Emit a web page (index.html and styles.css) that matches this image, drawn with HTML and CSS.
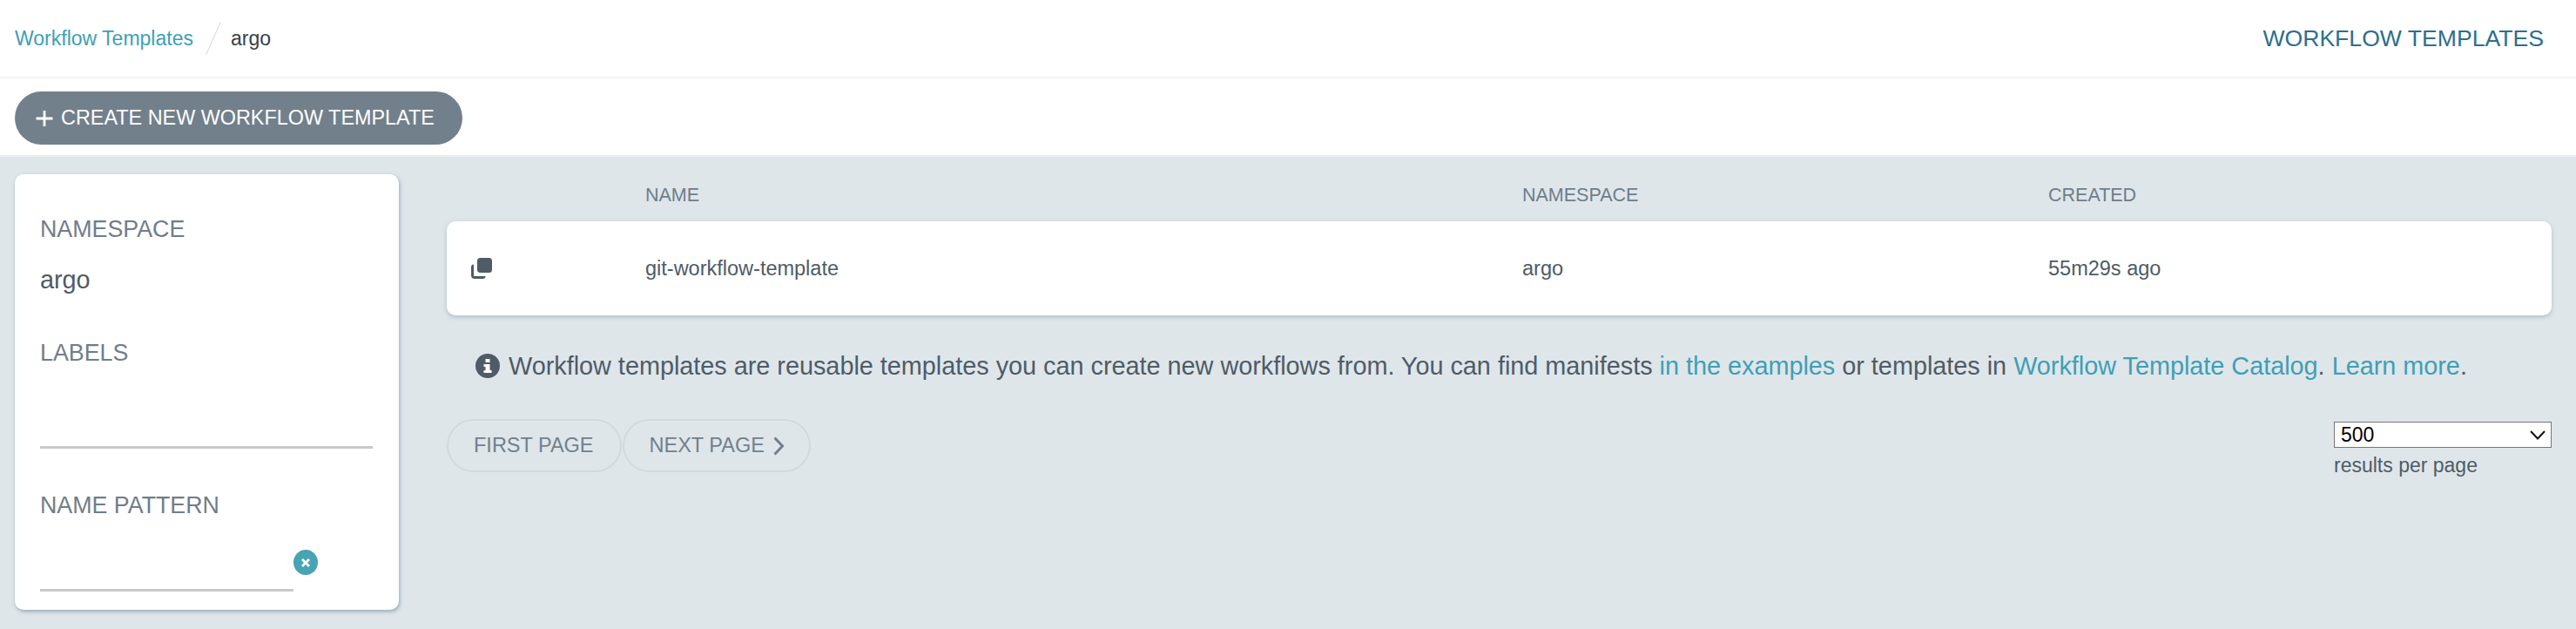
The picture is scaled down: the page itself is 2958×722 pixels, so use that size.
FILE: index.html
```html
<!doctype html>
<html lang="en">
<head>
	<meta http-equiv="Content-Type" content="text/html; charset=utf-8">
	<title>Workflow Templates</title>
	<link rel="stylesheet" href="styles.css">
</head>
<body>
	<header class="top-bar">
		<div class="breadcrumbs">
			<a class="crumb-link" href="#">Workflow Templates</a>
			<svg class="crumb-sep" width="18" height="38" viewBox="0 0 18 38"><path d="M17.500 0 L0.500 38" stroke="#ccd6dd" stroke-width="1" fill="none"/></svg>
			<span class="crumb-current">argo</span>
		</div>
		<div class="page-title">WORKFLOW TEMPLATES</div>
	</header>

	<div class="tool-bar">
		<button class="btn-create">
			<svg class="plus" width="20" height="18" viewBox="0 0 20 18"><path d="M10 0 V18 M0.500 9 H19.500" stroke="#fff" stroke-width="2.800" fill="none"/></svg>
			CREATE NEW WORKFLOW TEMPLATE
		</button>
	</div>

	<div class="content">
		<aside class="filters">
			<div class="filter-title">NAMESPACE</div>
			<div class="filter-value">argo</div>
			<div class="filter-title labels-title">LABELS</div>
			<div class="filter-line"></div>
			<div class="filter-title pattern-title">NAME PATTERN</div>
			<div class="pattern-row">
				<div class="filter-line short"></div>
				<span class="clear-btn">
					<svg width="12" height="12" viewBox="0 0 12 12"><path d="M2 2 L10 10 M10 2 L2 10" stroke="#fff" stroke-width="2.800" fill="none"/></svg>
				</span>
			</div>
		</aside>

		<main class="list">
			<div class="table-head">
				<div></div>
				<div>NAME</div>
				<div>NAMESPACE</div>
				<div>CREATED</div>
			</div>
			<div class="table-row">
				<div class="row-icon">
					<svg width="24" height="24" viewBox="0 0 24 24">
						<path d="M3 9 Q1.500 9 1.500 10.500 V20 Q1.500 22.500 4 22.500 H13.500 Q15 22.500 15 21" stroke="#4f5b66" stroke-width="3" fill="none"/>
						<rect x="7" y="0" width="17" height="17" rx="3.500" fill="#4f5b66"/>
					</svg>
				</div>
				<div>git-workflow-template</div>
				<div>argo</div>
				<div>55m29s ago</div>
			</div>

			<p class="info">
				<svg class="info-icon" width="28" height="28" viewBox="0 0 28 28">
					<circle cx="14" cy="14" r="14" fill="#4f5b66"/>
					<rect x="11.500" y="6" width="5" height="4" fill="#fff"/>
					<path d="M9.500 12 H16.500 V19 H18.500 V22 H9.500 V19 H11.500 V15 H9.500 Z" fill="#fff"/>
				</svg>
				Workflow templates are reusable templates you can create new workflows from. You can find manifests <a href="#">in the examples</a> or templates in <a href="#">Workflow Template Catalog</a>. <a href="#">Learn more</a>.
			</p>

			<div class="pager">
				<div class="pager-btns">
					<button class="btn-page">FIRST PAGE</button>
					<button class="btn-page">NEXT PAGE
						<svg width="14" height="22" viewBox="0 0 14 22"><path d="M2.500 1.500 L11.500 11 L2.500 20.500" stroke="#73808b" stroke-width="3" fill="none"/></svg>
					</button>
				</div>
				<div class="page-size">
					<div class="select-wrap">
						<select class="size-select">
							<option>500</option>
						</select>
						<svg class="select-arrow" width="18" height="11" viewBox="0 0 18 11"><path d="M1 1 L9 9.500 L17 1" stroke="#111" stroke-width="2" fill="none"/></svg>
					</div>
					<div class="size-label">results per page</div>
				</div>
			</div>
		</main>
	</div>
</body>
</html>
```

FILE: styles.css
```css
html, body { margin: 0; padding: 0; }
body {
  font-family: "Liberation Sans", Arial, sans-serif;
  background: #dee6ea;
  height: 722px;
  overflow: hidden;
  color: #4f5b66;
}
a { color: #3f9fb5; text-decoration: none; }
button { font-family: inherit; cursor: pointer; }

/* Top bar */
.top-bar {
  height: 88px;
  background: #fff;
  border-bottom: 2px solid #f4f5f6;
  display: flex;
  align-items: center;
  justify-content: space-between;
  padding: 0 37px 0 17px;
}
.breadcrumbs { display: flex; align-items: center; font-size: 23px; }
.crumb-link { color: #3f9fb5; }
.crumb-sep { margin: 0 11px 0 14px; }
.crumb-current { color: #363f4c; }
.page-title { font-size: 26.600px; color: #2d6f8c; }

.tool-bar {
  height: 90px;
  background: #fff;
  box-sizing: border-box;
  border-bottom: 2px solid #ecf0f3;
  padding: 15px 0 0 17px;
}
.btn-create {
  height: 61px;
  width: 514px;
  border: 0;
  border-radius: 31px;
  background: #72808b;
  color: #fff;
  font-size: 23.400px;
  display: flex;
  align-items: center;
  padding: 0 0 0 24px;
  white-space: nowrap;
}
.plus { margin-right: 9px; flex: none; }

/* Main area */
.content { display: flex; align-items: flex-start; padding: 20px 28px 0 17px; }
.filters {
  width: 441px;
  height: 500px;
  flex: none;
  box-sizing: border-box;
  background: #fff;
  border-radius: 10px;
  box-shadow: 1px 2px 4px rgba(90, 115, 135, 0.55);
  padding: 47px 30px 0 29px;
}
.filter-title { font-size: 26.800px; line-height: 32px; color: #6f7d89; }
.filter-value { font-size: 28.800px; line-height: 32px; margin-top: 26px; color: #4f5b66; }
.labels-title { margin-top: 52px; }
.filter-line { height: 3px; background: #c9c9c9; margin-top: 91px; }
.pattern-title { margin-top: 49px; }
.pattern-row { display: flex; align-items: flex-end; }
.filter-line.short { width: 291px; margin-top: 80px; flex: none; }
.clear-btn {
  width: 28px;
  height: 29px;
  border-radius: 50%;
  background: #48a3b5;
  display: flex;
  align-items: center;
  justify-content: center;
  margin-bottom: 19px;
}

.list { flex: 1; margin-left: 55px; min-width: 0; }
.table-head, .table-row {
  display: grid;
  grid-template-columns: 228px 1007px 604px 1fr;
}
.table-head {
  height: 54px;
  align-items: center;
  font-size: 21.500px;
  color: #6f7d89;
  padding-bottom: 5px;
  box-sizing: border-box;
}
.table-row {
  height: 108px;
  align-items: center;
  background: #fff;
  border-radius: 10px;
  box-shadow: 0 2px 5px rgba(90, 115, 135, 0.35);
  font-size: 23.500px;
  color: #4f5b66;
}
.row-icon { padding-left: 28px; display: flex; }

.info {
  margin: 40px 0 0 33px;
  font-size: 28.800px;
  line-height: 36px;
  white-space: nowrap;
  color: #4f5b66;
}
.info-icon { vertical-align: -4px; margin-right: 2px; }

.pager { display: flex; justify-content: space-between; align-items: flex-start; margin-top: 43px; }
.pager-btns { display: flex; gap: 1px; }
.btn-page {
  height: 61px;
  background: transparent;
  border: 2px solid #d0dade;
  border-radius: 31px;
  color: #72808b;
  font-size: 23.500px;
  padding: 0 30px 0 29px;
  display: flex;
  align-items: center;
  gap: 9px;
  white-space: nowrap;
}
.btn-page:last-child { padding-right: 28px; }
.page-size { width: 250px; padding-top: 3px; }
.select-wrap { position: relative; height: 30px; }
.size-select {
  display: block;
  appearance: none;
  width: 250px;
  height: 30px;
  font-family: inherit;
  font-size: 23px;
  padding: 0 0 0 7px;
  background: #fff;
  color: #000;
  border: 1px solid #767676;
  border-radius: 0;
}
.select-arrow { position: absolute; right: 7px; top: 10px; }
.size-label { font-size: 23px; line-height: 28px; margin-top: 6px; color: #4f5b66; }
```
